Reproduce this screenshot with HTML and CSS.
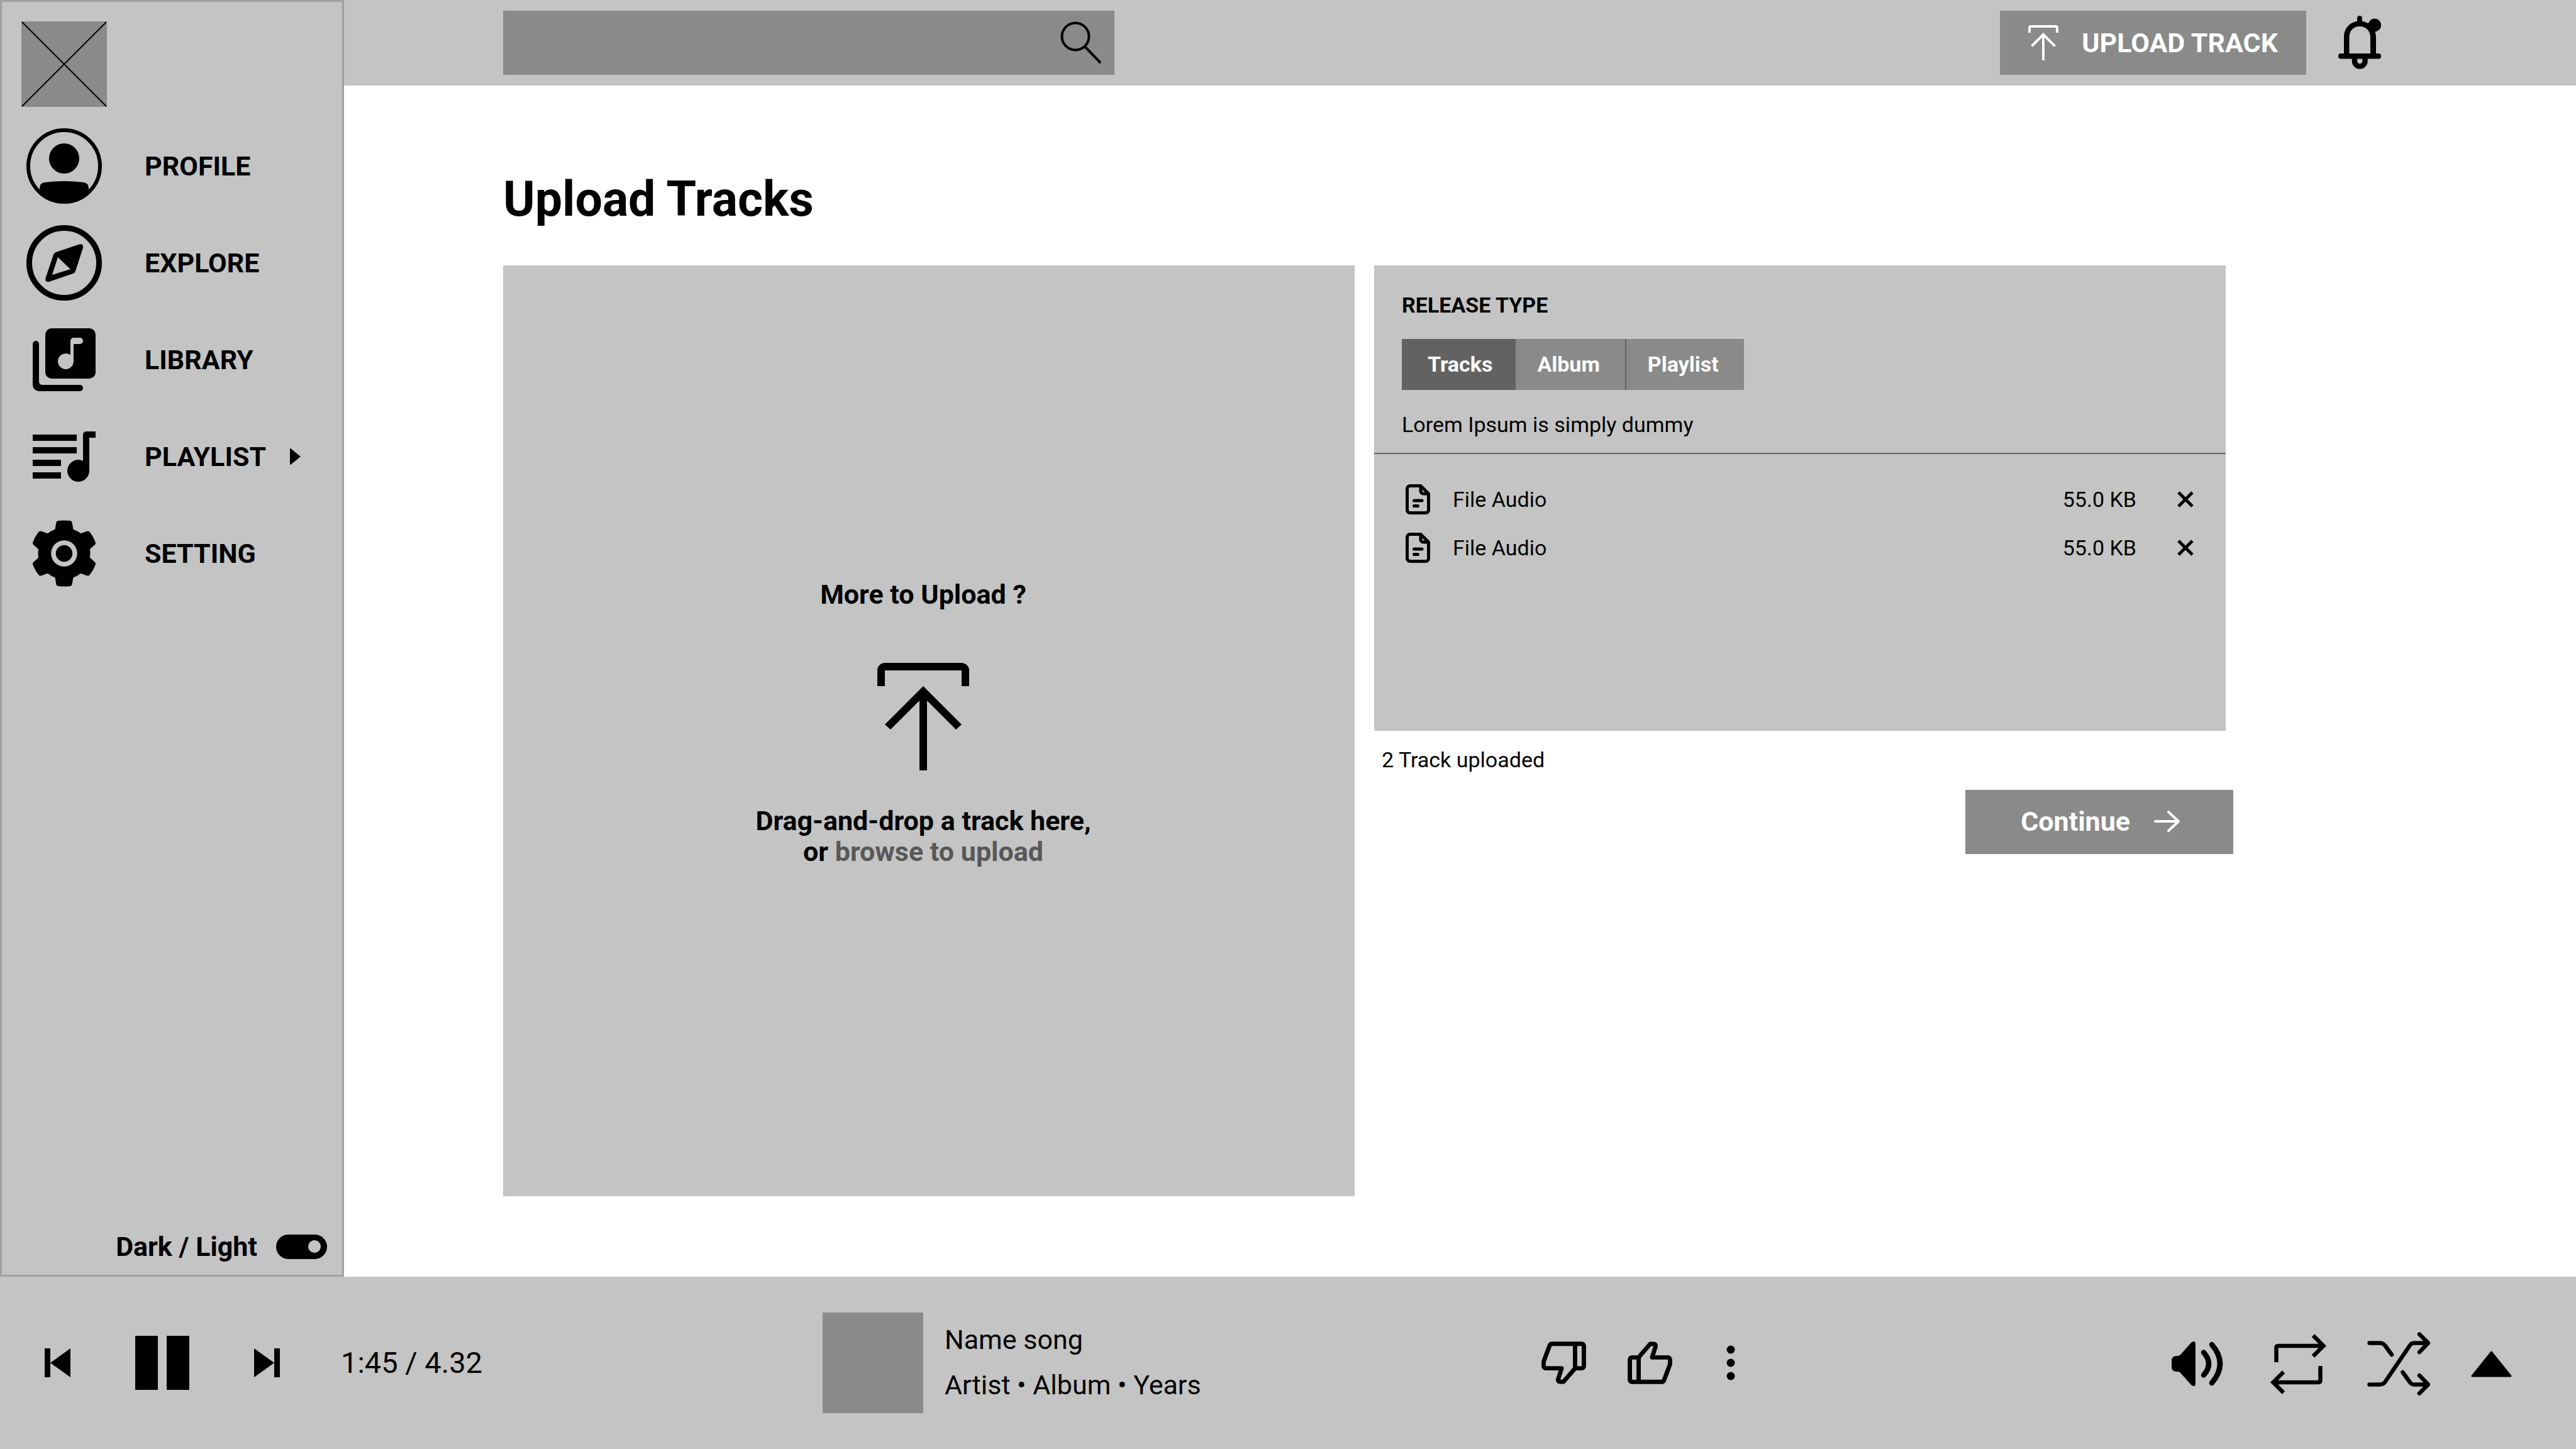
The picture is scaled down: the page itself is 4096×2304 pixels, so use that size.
FILE: index.html
```html
<!DOCTYPE html>
<html lang="en">
<head>
  <meta charset="utf-8">
  <meta name="viewport" content="width=device-width, initial-scale=1">
  <title>Upload Tracks</title>
  <link rel="stylesheet" href="styles.css">
</head>
<body>
  <svg class="sprite" aria-hidden="true">
    <symbol id="icon-upload" viewBox="0 0 146 171">
      <path fill="currentColor" d="M0 37V12A12 12 0 0 1 12 0H134A12 12 0 0 1 146 12V37H134V12H12V37Z"/>
      <path fill="currentColor" d="M73 37L134 98L125 106L79 60V171H67V60L21 106L12 98Z"/>
    </symbol>
    <symbol id="icon-thumb" viewBox="0 0 279 266">
      <g fill="none" stroke="currentColor" stroke-width="27" stroke-linejoin="round">
        <path d="M69 99H27A13 13 0 0 0 14 112V239A13 13 0 0 0 27 252H214Q223 252 227 243L265 142V112A13 13 0 0 0 252 99H153L175 30Q177 15 163 15H141L69 99V252"/>
      </g>
    </symbol>
    <symbol id="icon-file" viewBox="0 0 39 48">
      <g fill="none" stroke="currentColor" stroke-width="5" stroke-linecap="round" stroke-linejoin="round">
        <path d="M24 2.500H7A4.500 4.500 0 0 0 2.500 7V41A4.500 4.500 0 0 0 7 45.500H32A4.500 4.500 0 0 0 36.500 41V15L24 2.500V11A4 4 0 0 0 28 15H36"/>
        <path d="M13.500 26H26M13.500 34.500H19.500"/>
      </g>
    </symbol>
    <symbol id="icon-close" viewBox="0 0 26 26">
      <path fill="none" stroke="currentColor" stroke-width="5" d="M2 2L24 24M24 2L2 24"/>
    </symbol>
  </svg>

  <div class="app">
    <aside class="sidebar">
      <a class="logo" href="#" aria-label="Home">
        <svg viewBox="0 0 136 136" width="136" height="136"><path d="M1 1L135 135M135 1L1 135" stroke="#000" stroke-width="2"/></svg>
      </a>
      <nav class="nav" aria-label="Main">
        <a class="nav-link" href="#">
          <svg viewBox="0 0 120 120" width="120" height="120">
            <circle cx="60" cy="60" r="57" fill="none" stroke="#000" stroke-width="6"/>
            <circle cx="60" cy="48" r="24"/>
            <path d="M21 99V95Q21 87 29 86Q60 82 91 86Q99 87 99 95V99L92 108Q60 130 28 108Z"/>
          </svg>
          <span>PROFILE</span>
        </a>
        <a class="nav-link" href="#">
          <svg viewBox="0 0 120 120" width="120" height="120">
            <circle cx="60" cy="60" r="55.500" fill="none" stroke="#000" stroke-width="9"/>
            <path fill-rule="evenodd" d="M84 30.500Q91 29 90 36L78 73Q77 76 74 77L36 90Q29 91 30.500 84L43 47Q44 44 47 43ZM50 51L41 79L70 70Z"/>
          </svg>
          <span>EXPLORE</span>
        </a>
        <a class="nav-link" href="#">
          <svg viewBox="0 0 24 24" width="120" height="120">
            <path fill-rule="evenodd" d="M8 2H20A2 2 0 0 1 22 4V16A2 2 0 0 1 20 18H8A2 2 0 0 1 6 16V4A2 2 0 0 1 8 2ZM15 5A1 1 0 0 0 14 6V10.500A2.500 2.500 0 1 0 15 12.500V7H17A1 1 0 0 0 17 5Z"/>
            <path d="M3 6A1 1 0 0 0 2 7V20A2 2 0 0 0 4 22H17A1 1 0 0 0 17 20H5A1 1 0 0 1 4 19V7A1 1 0 0 0 3 6Z"/>
          </svg>
          <span>LIBRARY</span>
        </a>
        <a class="nav-link" href="#">
          <svg viewBox="0 0 24 24" width="120" height="120">
            <path d="M2 5H16V7H2ZM2 9H16V11H2ZM2 13H11V15H2ZM2 17H11V19H2Z"/>
            <path d="M22 4V6H20V16.500A3.500 3.500 0 1 1 18 13.340V5A1 1 0 0 1 19 4Z"/>
          </svg>
          <span>PLAYLIST</span>
          <svg class="nav-arrow" viewBox="0 0 17 26" width="17" height="26"><path d="M0 1Q0 0 1 0L17 13L1 26Q0 26 0 25Z"/></svg>
        </a>
        <a class="nav-link" href="#">
          <svg viewBox="-12 -12 24 24" width="120" height="120">
            <path fill-rule="evenodd" d="M-2.500 -9.900Q-2.400 -10.350 -1.900 -10.400Q0 -10.600 1.900 -10.400Q2.400 -10.350 2.500 -9.900L2.900 -7.650Q4.200 -7.200 5.250 -6.350L7.350 -7.100Q7.800 -7.200 8.100 -6.850Q9.400 -5.200 10 -3.400Q10.050 -3 9.800 -2.800L8.200 -1.350Q8.400 0 8.200 1.350L9.800 2.800Q10.050 3 10 3.400Q9.400 5.200 8.100 6.850Q7.800 7.200 7.350 7.100L5.250 6.350Q4.200 7.200 2.900 7.650L2.500 9.900Q2.400 10.350 1.900 10.400Q0 10.600 -1.900 10.400Q-2.400 10.350 -2.500 9.900L-2.900 7.650Q-4.200 7.200 -5.250 6.350L-7.350 7.100Q-7.800 7.200 -8.100 6.850Q-9.400 5.200 -10 3.400Q-10.050 3 -9.800 2.800L-8.200 1.350Q-8.400 0 -8.200 -1.350L-9.800 -2.800Q-10.050 -3 -10 -3.400Q-9.400 -5.200 -8.100 -6.850Q-7.800 -7.200 -7.350 -7.100L-5.250 -6.350Q-4.200 -7.200 -2.900 -7.650ZM0 -4.150A4.150 4.150 0 1 0 0 4.150A4.150 4.150 0 1 0 0 -4.150Z"/>
            <circle r="2.650"/>
          </svg>
          <span>SETTING</span>
        </a>
      </nav>
      <label class="theme">
        <span>Dark / Light</span>
        <input class="switch" type="checkbox" checked>
      </label>
    </aside>

    <header class="topbar">
      <form class="search" role="search">
        <input class="search-input" type="search" aria-label="Search">
        <button class="icon-button" type="button" aria-label="Search">
          <svg viewBox="0 0 66 68" width="66" height="68">
            <g fill="none" stroke="#000" stroke-width="4"><circle cx="24" cy="24" r="21.500"/><path d="M39 40L64 66"/></g>
          </svg>
        </button>
      </form>
      <div class="topbar-actions">
        <button class="button upload-button" type="button">
          <svg width="48" height="56"><use href="#icon-upload"/></svg>
          <span>UPLOAD TRACK</span>
        </button>
        <button class="icon-button" type="button" aria-label="Notifications">
          <svg viewBox="0 0 68 86" width="68" height="86">
            <path d="M30 10V4A4 4 0 0 1 38 4V10Z"/>
            <path fill-rule="evenodd" d="M9 61V34C9 19 20 8.500 34 8.500S60 19 60 34V61ZM17.500 61H51V34C51 24 44 17 34 17S17.500 24 17.500 34Z"/>
            <rect y="60" width="68" height="8.500" rx="4"/>
            <path d="M26 67V73A8.300 8.300 0 0 0 42.500 73V67" fill="none" stroke="#000" stroke-width="8.500"/>
            <circle cx="57.800" cy="15" r="10.400"/>
          </svg>
        </button>
      </div>
    </header>

    <main class="content">
      <h1 class="title">Upload Tracks</h1>
      <div class="columns">
        <section class="dropzone">
          <h2 class="drop-title">More to Upload ?</h2>
          <svg width="146" height="171"><use href="#icon-upload"/></svg>
          <p class="drop-hint">Drag-and-drop a track here,<br>or <a class="browse" href="#">browse to upload</a></p>
        </section>

        <div class="release-column">
          <section class="release">
            <div class="release-head">
              <h2 class="release-title">RELEASE TYPE</h2>
              <div class="tabs" role="group" aria-label="Release type">
                <button class="tab tab-active" type="button" aria-pressed="true">Tracks</button>
                <button class="tab" type="button" aria-pressed="false">Album</button>
                <button class="tab" type="button" aria-pressed="false">Playlist</button>
              </div>
              <p class="release-note">Lorem Ipsum is simply dummy</p>
            </div>
            <ul class="files">
              <li class="file">
                <svg width="39" height="48"><use href="#icon-file"/></svg>
                <span class="file-name">File Audio</span>
                <span>55.0 KB</span>
                <button class="icon-button" type="button" aria-label="Remove file"><svg width="26" height="26"><use href="#icon-close"/></svg></button>
              </li>
              <li class="file">
                <svg width="39" height="48"><use href="#icon-file"/></svg>
                <span class="file-name">File Audio</span>
                <span>55.0 KB</span>
                <button class="icon-button" type="button" aria-label="Remove file"><svg width="26" height="26"><use href="#icon-close"/></svg></button>
              </li>
            </ul>
          </section>
          <p class="upload-count">2 Track uploaded</p>
          <button class="button continue" type="button">
            <span>Continue</span>
            <svg viewBox="0 0 41 34" width="41" height="34"><path d="M2 17H39M23 2L39 17L23 32" fill="none" stroke="#fff" stroke-width="4" stroke-linecap="round" stroke-linejoin="round"/></svg>
          </button>
        </div>
      </div>
    </main>

    <footer class="player">
      <div class="transport">
        <button class="icon-button" type="button" aria-label="Previous"><svg viewBox="0 0 41 46" width="41" height="46"><path d="M0 0H9V46H0ZM41 0V46L9 23Z"/></svg></button>
        <button class="icon-button" type="button" aria-label="Pause"><svg viewBox="0 0 86 86" width="86" height="86"><path d="M0 0H36V86H0ZM50 0H86V86H50Z"/></svg></button>
        <button class="icon-button" type="button" aria-label="Next"><svg viewBox="0 0 41 46" width="41" height="46"><path d="M32 0H41V46H32ZM0 0V46L32 23Z"/></svg></button>
        <span class="time">1:45 / 4.32</span>
      </div>
      <div class="now-playing">
        <div class="cover"></div>
        <div class="song">
          <p>Name song</p>
          <p>Artist • Album • Years</p>
        </div>
      </div>
      <div class="rating">
        <button class="icon-button dislike" type="button" aria-label="Dislike"><svg class="flipped" width="71" height="68"><use href="#icon-thumb"/></svg></button>
        <button class="icon-button like" type="button" aria-label="Like"><svg width="71" height="68"><use href="#icon-thumb"/></svg></button>
        <button class="icon-button more" type="button" aria-label="More"><svg viewBox="0 0 14 56" width="14" height="56"><circle cx="7" cy="7" r="6.500"/><circle cx="7" cy="28" r="6.500"/><circle cx="7" cy="49" r="6.500"/></svg></button>
      </div>
      <div class="modes">
        <button class="icon-button volume" type="button" aria-label="Volume">
          <svg viewBox="0 0 82 71" width="82" height="71">
            <path d="M0 31Q0 23 8 23H10Q13 23 15 20L31 2Q33 0 36 0Q38 1 38 4V67Q38 70 36 71Q33 71 31 69L15 51Q13 48 10 48H8Q0 48 0 40Z"/>
            <path d="M51 17.500Q67 35.500 51 53.500M64 5Q90 35.500 64 66" fill="none" stroke="#000" stroke-width="8.500" stroke-linecap="round"/>
          </svg>
        </button>
        <button class="icon-button" type="button" aria-label="Repeat">
          <svg viewBox="0 0 89 96" width="89" height="96">
            <path d="M9.500 45V22Q9.500 19 12.500 19H84M68 2.500L84.500 19L68 35.500M79.500 51V74Q79.500 77 76.500 77H5M21 60.500L4.500 77L21 93.500" fill="none" stroke="#000" stroke-width="6.500"/>
          </svg>
        </button>
        <button class="icon-button" type="button" aria-label="Shuffle">
          <svg viewBox="0 0 100 101" width="100" height="101">
            <path d="M3.500 17.500H20Q25 17.500 28 21L39 36M3.500 83.500H20Q25 83.500 28 80L68 21Q70 17.500 75 17.500H96.500M56.500 64L68 80Q70 83.500 75 83.500H96.500M83 3.500L97 17.500L83 32M83 69L97 83.500L83 97.500" fill="none" stroke="#000" stroke-width="6.500" stroke-linecap="round" stroke-linejoin="round"/>
          </svg>
        </button>
        <button class="icon-button" type="button" aria-label="Expand player">
          <svg viewBox="0 0 65 42" width="65" height="42"><path d="M32.500 2L63 40H2Z" stroke="#000" stroke-width="3" stroke-linejoin="round"/></svg>
        </button>
      </div>
    </footer>
  </div>
</body>
</html>
```
FILE: styles.css
```css
:root {
  --surface: #c4c4c4;
  --control: #8a8a8a;
  --control-dark: #626262;
  --edge: #a0a0a0;
  --text-small: 34px;
  --text-medium: 43px;
  --text-time: 47px;
  --text-title: 77px;
}

* {
  box-sizing: border-box;
}

body,
h1,
h2,
p,
ul {
  margin: 0;
  padding: 0;
}

body {
  font-family: Roboto, "Liberation Sans", sans-serif;
  font-size: var(--text-medium);
  line-height: 50px;
  color: #000;
  background: #fff;
}

a {
  color: inherit;
  text-decoration: none;
}

button,
input {
  font: inherit;
  color: inherit;
}

svg {
  display: block;
  flex: none;
}

.sprite {
  display: none;
}

.icon-button {
  flex: none;
  padding: 0;
  border: 0;
  background: none;
}

.button {
  display: flex;
  align-items: center;
  height: 102px;
  border: 0;
  background: var(--control);
  color: #fff;
  font-weight: 700;
}

.app {
  display: grid;
  grid-template-columns: 547px 1fr;
  grid-template-rows: 136px 1fr 274px;
  min-height: 100vh;
}

/* Sidebar */

.sidebar {
  grid-row: 1 / 3;
  display: flex;
  flex-direction: column;
  padding: 31px 24px 20px 31px;
  border: 3px solid var(--edge);
  background: var(--surface);
  font-weight: 700;
}

.logo {
  width: 136px;
  background: var(--control);
}

.nav {
  display: flex;
  flex-direction: column;
  gap: 34px;
  padding: 34px 8px;
}

.nav-link {
  display: flex;
  align-items: center;
  gap: 68px;
}

.nav-arrow {
  margin-left: -30px;
}

.theme {
  display: flex;
  align-items: center;
  justify-content: flex-end;
  gap: 30px;
  margin-top: auto;
}

.switch {
  display: flex;
  align-items: center;
  justify-content: flex-end;
  appearance: none;
  width: 81px;
  height: 39px;
  margin: 0;
  padding: 0 10px;
  border-radius: 20px;
  background: #000;
}

.switch::before {
  content: "";
  width: 20px;
  height: 20px;
  border-radius: 50%;
  background: var(--surface);
}

.switch:not(:checked) {
  justify-content: flex-start;
}

/* Top bar */

.topbar {
  display: flex;
  align-items: center;
  justify-content: space-between;
  padding: 0 310px 0 253px;
  background: var(--surface);
}

.search {
  display: flex;
  align-items: center;
  width: 972px;
  height: 102px;
  padding-right: 20px;
  background: var(--control);
}

.search-input {
  flex: 1;
  height: 100%;
  padding: 0 30px;
  border: 0;
  background: none;
}

.topbar-actions {
  display: flex;
  align-items: center;
  gap: 51px;
}

.upload-button {
  gap: 37px;
  padding: 0 45px;
}

/* Content */

.content {
  display: flex;
  flex-direction: column;
  gap: 60px;
  padding: 136px 557px 128px 253px;
}

.title {
  font-size: var(--text-title);
  line-height: 90px;
}

.columns {
  flex: 1;
  display: grid;
  grid-template-columns: 1fr 1fr;
  gap: 31px;
}

.dropzone {
  display: flex;
  flex-direction: column;
  align-items: center;
  padding: 498px 18px 120px 0;
  background: var(--surface);
  font-weight: 700;
  text-align: center;
}

.drop-title {
  margin-bottom: 84px;
  font-size: inherit;
}

.drop-hint {
  margin-top: 56px;
  line-height: 49px;
}

.browse {
  color: #585858;
}

.release-column {
  display: flex;
  flex-direction: column;
  font-size: var(--text-small);
  line-height: 40px;
}

.release {
  min-height: 740px;
  background: var(--surface);
}

.release-head {
  padding: 43px 44px 25px;
  border-bottom: 2px solid var(--control-dark);
}

.release-title {
  margin-bottom: 34px;
  font-size: inherit;
}

.tabs {
  display: flex;
  margin-bottom: 35px;
}

.tab {
  height: 81px;
  padding: 0 40px 2px 34px;
  border: 0;
  border-right: 2px solid var(--control-dark);
  background: var(--control);
  color: #fff;
  font-weight: 700;
}

.tab:last-child {
  border-right: 0;
}

.tab-active {
  padding: 0 35px 2px 41px;
  background: var(--control-dark);
}

.files {
  display: flex;
  flex-direction: column;
  gap: 29px;
  padding: 48px 51px 47px 50px;
  list-style: none;
}

.file {
  display: flex;
  align-items: center;
}

.file-name {
  flex: 1;
  padding-left: 36px;
}

.file .icon-button {
  margin-left: 65px;
}

.upload-count {
  margin: 26px 0 28px 12px;
}

.continue {
  align-self: flex-end;
  gap: 38px;
  margin-right: -12px;
  padding: 0 85px 2px 88px;
  font-size: var(--text-medium);
}

/* Player */

.player {
  grid-column: 1 / -1;
  display: grid;
  grid-template-columns: 1237px 1143px 1fr auto;
  align-items: center;
  padding: 0 102px 0 71px;
  background: var(--surface);
}

.transport,
.now-playing,
.rating,
.modes {
  display: flex;
  align-items: center;
}

.transport {
  gap: 103px;
}

.time {
  margin-left: -6px;
  font-size: var(--text-time);
}

.now-playing {
  gap: 34px;
}

.cover {
  width: 160px;
  height: 160px;
  background: var(--control);
}

.song {
  display: flex;
  flex-direction: column;
  gap: 22px;
  padding-bottom: 3px;
}

.rating {
  gap: 66px;
}

.flipped {
  transform: rotate(180deg);
}

.more {
  margin-left: 20px;
}

.modes {
  gap: 65px;
  padding-top: 3px;
}

.volume {
  margin-right: 10px;
}
```
